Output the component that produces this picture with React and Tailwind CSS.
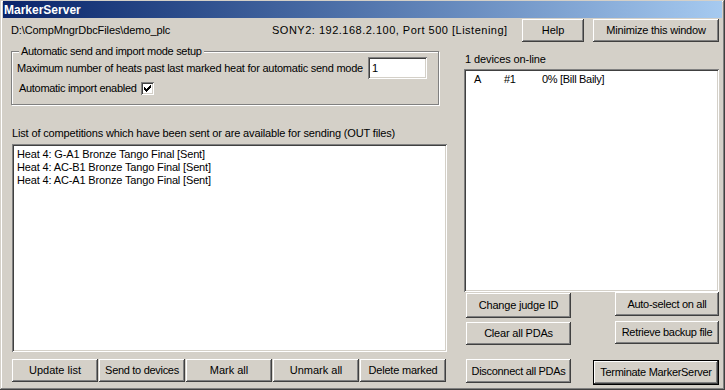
import React from 'react';

// ─── Classic Win9x bevels ─────────────────────────────────────────────────────

const RAISED = 'shadow-[inset_-1px_-1px_#404040,inset_1px_1px_#ffffff,inset_-2px_-2px_#808080,inset_2px_2px_#d4d0c8]';
const SUNKEN = 'shadow-[inset_1px_1px_#808080,inset_-1px_-1px_#ffffff,inset_2px_2px_#404040,inset_-2px_-2px_#d4d0c8]';

function Btn({ children, className = '', isDefault = false }) {
  if (isDefault) {
    return (
      <div className={`border border-black bg-[#d4d0c8] flex ${className}`}>
        <div className={`flex-1 flex items-center justify-center whitespace-nowrap ${RAISED}`}>{children}</div>
      </div>
    );
  }
  return (
    <div className={`bg-[#d4d0c8] flex items-center justify-center whitespace-nowrap ${RAISED} ${className}`}>
      {children}
    </div>
  );
}

const competitions = [
  'Heat 4: G-A1 Bronze Tango Final [Sent]',
  'Heat 4: AC-B1 Bronze Tango Final [Sent]',
  'Heat 4: AC-A1 Bronze Tango Final [Sent]',
];

export default function App() {
  return (
    <div className="w-[725px] h-[390px] bg-[#d4d0c8] flex flex-col px-[3px] pt-px pb-[3px] text-black text-[11px] leading-[13px] font-['Liberation_Sans',Arial,sans-serif] shadow-[inset_-1px_-1px_#404040,inset_1px_1px_#d4d0c8,inset_-2px_-2px_#808080,inset_2px_2px_#ffffff] overflow-hidden">
      {/* Title bar */}
      <div className="h-[17px] shrink-0 flex items-center pl-px bg-gradient-to-r from-[#0a246a] to-[#a6caf0]">
        <span className="text-white font-bold text-[12px] leading-[14px]">MarkerServer</span>
      </div>

      {/* Top row */}
      <div className="h-[23px] mt-px shrink-0 flex items-center">
        <span className="ml-[8px] w-[261px] tracking-[-0.1px]">D:\CompMngrDbcFiles\demo_plc</span>
        <span className="flex-1 tracking-[0.5px]">SONY2: 192.168.2.100, Port 500 [Listening]</span>
        <Btn className="w-[62px] h-[23px]">Help</Btn>
        <Btn className="w-[126px] h-[23px] ml-[9px] mr-[3px] tracking-[-0.2px]">Minimize this window</Btn>
      </div>

      <div className="flex flex-1">
        {/* Left column */}
        <div className="ml-[8px] w-[436px] flex flex-col">
          {/* Group box */}
          <div className="relative mt-[9px] w-[428px] h-[54px] border border-[#808080] shadow-[inset_1px_1px_#ffffff,1px_1px_#ffffff] pl-[5px] pt-[5px]">
            <span className="absolute -top-[7px] left-[7px] bg-[#d4d0c8] px-[2px] tracking-[-0.3px]">Automatic send and import mode setup</span>
            <div className="flex items-center h-[22px]">
              <span className="w-[351px] tracking-[-0.24px]">Maximum number of heats past last marked heat for automatic send mode</span>
              <div className={`w-[59px] h-[22px] bg-white pl-[4px] flex items-center ${SUNKEN}`}>1</div>
            </div>
            <div className="flex items-center mt-[3px] pl-[2px]">
              <span className="tracking-[-0.3px]">Automatic import enabled</span>
              <div className={`ml-[4px] w-[13px] h-[13px] bg-white flex items-center justify-center ${SUNKEN}`}>
                <svg width="7" height="7" viewBox="0 0 7 7">
                  <path d="M0 2h1v1h1v1h1v-1h1v-1h1v-1h1v-1h1v3h-1v1h-1v1h-1v1h-1v1h-1v-1h-1v-1h-1z" fill="#000" />
                </svg>
              </div>
            </div>
          </div>

          <div className="mt-[22px] pl-px tracking-[-0.15px]">List of competitions which have been sent or are available for sending (OUT files)</div>

          <div className={`mt-[4px] ml-px w-[435px] h-[208px] bg-white pl-[5px] pt-[4px] ${SUNKEN}`}>
            {competitions.map(c => (
              <div key={c} className="tracking-[-0.15px]">{c}</div>
            ))}
          </div>

          <div className="mt-[7px] ml-px flex gap-[1px]">
            <Btn className="w-[86px] h-[23px]">Update list</Btn>
            <Btn className="w-[86px] h-[23px] tracking-[-0.3px]">Send to devices</Btn>
            <Btn className="w-[86px] h-[23px]">Mark all</Btn>
            <Btn className="w-[86px] h-[23px]">Unmark all</Btn>
            <Btn className="w-[86px] h-[23px] tracking-[-0.2px]">Delete marked</Btn>
          </div>
        </div>

        {/* Right column */}
        <div className="ml-[17px] w-[255px] flex flex-col">
          <div className="mt-[11px] pl-px tracking-[-0.1px]">1 devices on-line</div>
          <div className={`mt-[3px] w-[255px] h-[223px] bg-white pt-[4px] ${SUNKEN}`}>
            <div className="flex tracking-[-0.3px]">
              <span className="w-[40px] pl-[10px]">A</span>
              <span className="w-[38px]">#1</span>
              <span>0% [Bill Baily]</span>
            </div>
          </div>

          <div className="flex justify-between">
            <div className="ml-[2px] w-[105px] flex flex-col">
              <Btn className="mt-[1px] h-[25px] tracking-[-0.2px]">Change judge ID</Btn>
              <Btn className="mt-[4px] h-[23px] tracking-[-0.2px]">Clear all PDAs</Btn>
              <Btn className="mt-[14px] h-[24px] tracking-[-0.3px]">Disconnect all PDAs</Btn>
            </div>
            <div className="flex flex-col items-end">
              <Btn className="w-[104px] h-[24px] tracking-[-0.3px]">Auto-select on all</Btn>
              <Btn className="mt-[5px] w-[104px] h-[23px] tracking-[-0.3px]">Retrieve backup file</Btn>
              <Btn isDefault className="mt-[16px] w-[126px] h-[25px] tracking-[-0.3px]">Terminate MarkerServer</Btn>
            </div>
          </div>
        </div>
      </div>
    </div>
  );
}
